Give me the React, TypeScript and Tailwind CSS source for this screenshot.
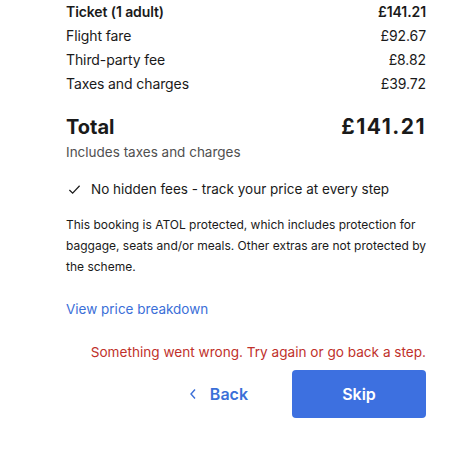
import React from "react";

const rows = [
  { label: "Flight fare", value: "£92.67" },
  { label: "Third-party fee", value: "£8.82" },
  { label: "Taxes and charges", value: "£39.72" },
];

const App = () => {
  return (
    <div
      className="w-[450px] h-[458px] bg-white text-[#1a1a1a]"
      style={{ fontFamily: "Inter, 'Noto Sans', sans-serif" }}
    >
      <div className="pl-[66px] pr-[24px]">
        {/* price rows */}
        <div className="flex justify-between text-[14px] tracking-[-0.1px] leading-[24px] font-semibold">
          <span>Ticket (1 adult)</span>
          <span>£141.21</span>
        </div>
        {rows.map((r) => (
          <div
            key={r.label}
            className="flex justify-between text-[14px] tracking-[-0.1px] leading-[24px]"
          >
            <span>{r.label}</span>
            <span>{r.value}</span>
          </div>
        ))}

        {/* total */}
        <div className="mt-[17px] flex justify-between items-center leading-[28px] font-bold">
          <span className="text-[20px]">Total</span>
          <span className="text-[21px] tracking-[1.5px]">£141.21</span>
        </div>
        <div className="mt-[1px] text-[13.5px] leading-[20px] text-[#505050]">
          Includes taxes and charges
        </div>

        <div className="mt-[17px] flex items-center gap-[10px] text-[13.5px] leading-[20px]">
          <svg
            width="13"
            height="13"
            viewBox="0 0 14 14"
            fill="none"
            stroke="#1a1a1a"
            strokeWidth="1.3"
            className="ml-[2px]"
          >
            <path d="M1.5 7.5 L5 11 L12.5 3" />
          </svg>
          <span>No hidden fees - track your price at every step</span>
        </div>

        <p className="mt-[15px] text-[12px] leading-[21px]">
          This booking is ATOL protected, which includes protection for
          baggage, seats and/or meals. Other extras are not protected by the
          scheme.
        </p>

        <a className="block mt-[22px] text-[13.5px] leading-[20px] text-[#3b6fd8]">
          View price breakdown
        </a>

        <div className="mt-[23px] text-right text-[13.6px] leading-[20px] text-[#c0312b]">
          Something went wrong. Try again or go back a step.
        </div>

        <div className="mt-[8px] flex justify-end items-center">
          <button className="flex items-center gap-[13px] h-[48px] px-[22px] text-[16px] font-semibold text-[#3b6fd8]">
            <svg
              width="8"
              height="12"
              viewBox="0 0 8 12"
              fill="none"
              stroke="#3b6fd8"
              strokeWidth="1.4"
            >
              <path d="M6 1.5 L2 6 L6 10.5" />
            </svg>
            Back
          </button>
          <button className="ml-[22px] w-[134px] h-[48px] rounded-[4px] bg-[#3d70e0] text-white text-[16px] font-semibold">
            Skip
          </button>
        </div>
      </div>
    </div>
  );
};

export default App;
